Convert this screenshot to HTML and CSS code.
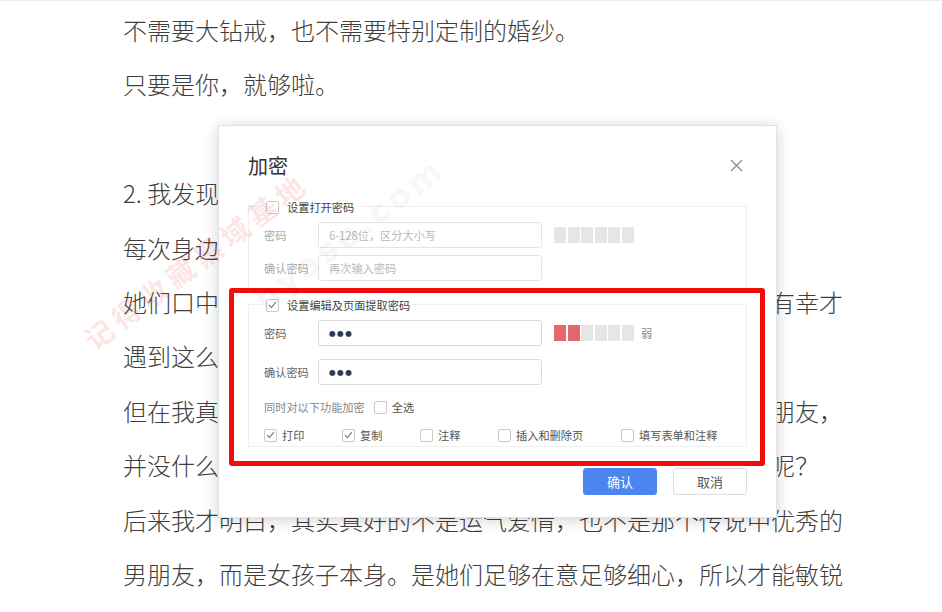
FILE: index.html
```html
<!DOCTYPE html>
<html lang="zh-CN">

<head>
    <meta charset="UTF-8">
    <meta name="viewport" content="width=device-width, initial-scale=1.0">
    <title>加密</title>
    <link rel="stylesheet" href="styles.css">
</head>

<body>
    <div class="page">
        <div class="doc">
            <p>不需要大钻戒，也不需要特别定制的婚纱。</p>
            <p>只要是你，就够啦。</p>
            <p>&nbsp;</p>
            <p>2. 我发现身边那些幸福的女孩子都有一个共同点。</p>
            <p>每次身边的朋友谈起自己的恋爱，总是满脸幸福。</p>
            <p>她们口中的男朋友总是温柔又体贴，我曾以为她们是运气好，有幸才</p>
            <p>遇到这么好的人。</p>
            <p>但在我真正了解之后才发现，她们的男朋友其实只是普通的男朋友，</p>
            <p>并没什么特别之处，那为什么她们都会觉得自己遇到了对的人呢？</p>
            <p>后来我才明白，其实真好的不是运气爱情，也不是那个传说中优秀的</p>
            <p>男朋友，而是女孩子本身。是她们足够在意足够细心，所以才能敏锐</p>
        </div>

        <!-- 加密弹窗 -->
        <div class="dialog">
            <div class="dialog-head">
                <h2>加密</h2>
                <span class="close">
                    <svg width="13" height="13" viewBox="0 0 13 13">
                        <path d="M1 1 L12 12 M12 1 L1 12" stroke="#8a8a8a" stroke-width="1.3" fill="none" />
                    </svg>
                </span>
            </div>

            <div class="group group-off">
                <div class="group-head"><span class="box"></span>设置打开密码</div>
                <div class="row">
                    <label>密码</label>
                    <input class="field" placeholder="6-128位，区分大小写">
                    <div class="meter">
                        <span></span><span></span><span></span><span></span><span></span><span></span>
                    </div>
                </div>
                <div class="row">
                    <label>确认密码</label>
                    <input class="field" placeholder="再次输入密码">
                </div>
            </div>

            <div class="group group-on">
                <div class="group-head"><span class="box"><svg width="9" height="8" viewBox="0 0 9 8"><path d="M1 4 L3.5 6.5 L8 1" stroke="#8c8c8c" stroke-width="1.2" fill="none" /></svg></span>设置编辑及页面提取密码</div>
                <div class="row">
                    <label>密码</label>
                    <div class="field dots">●●●</div>
                    <div class="meter">
                        <span class="on"></span><span class="on"></span><span></span><span></span><span></span><span></span>
                    </div>
                    <em class="level">弱</em>
                </div>
                <div class="row row-wide">
                    <label>确认密码</label>
                    <div class="field dots">●●●</div>
                </div>
                <div class="also">同时对以下功能加密<span class="box"></span><span class="txt">全选</span></div>
                <div class="checks">
                    <div class="check"><span class="box"><svg width="9" height="8" viewBox="0 0 9 8"><path d="M1 4 L3.5 6.5 L8 1" stroke="#8c8c8c" stroke-width="1.2" fill="none" /></svg></span>打印</div>
                    <div class="check"><span class="box"><svg width="9" height="8" viewBox="0 0 9 8"><path d="M1 4 L3.5 6.5 L8 1" stroke="#8c8c8c" stroke-width="1.2" fill="none" /></svg></span>复制</div>
                    <div class="check"><span class="box"></span>注释</div>
                    <div class="check"><span class="box"></span>插入和删除页</div>
                    <div class="check"><span class="box"></span>填写表单和注释</div>
                </div>
            </div>

            <div class="actions">
                <button class="btn primary">确认</button>
                <button class="btn">取消</button>
            </div>
        </div>

        <!-- 截图上的红框标注 -->
        <div class="mark-box"></div>

        <!-- 水印 -->
        <div class="watermark">记得收藏黑域基地</div>
        <div class="watermark-en">hyase.com</div>
    </div>
</body>

</html>
```

FILE: styles.css
```css
* {
    box-sizing: border-box;
}

body {
    margin: 0;
    background: #fff;
    font-family: "Noto Sans CJK SC", "Noto Sans", sans-serif;
}

.page {
    position: relative;
    width: 942px;
    height: 612px;
    overflow: hidden;
    box-shadow: inset 0 1px #ececec;
}

.doc {
    padding: 3px 0 0 123px;
}

.doc p {
    margin: 0;
    height: 54.4px;
    line-height: 54.4px;
    font-size: 24px;
    font-weight: 300;
    color: #3e3e3e;
    white-space: nowrap;
}

/* dialog */
.dialog {
    position: absolute;
    left: 218px;
    top: 125px;
    width: 559px;
    padding: 27px 29px 22px;
    background: #fff;
    border: 1px solid #e2e2e2;
    box-shadow: 0 2px 14px rgba(0, 0, 0, 0.18);
    font-size: 11.2px;
    color: #555;
}

.dialog-head {
    display: flex;
    justify-content: space-between;
    align-items: center;
    height: 24px;
}

.dialog-head h2 {
    margin: 0;
    font-size: 20px;
    font-weight: 400;
    color: #333;
}

.close {
    display: flex;
    margin-right: 4px;
}

.group {
    border: 1px solid #efefef;
    padding: 0 15px 10px;
}

.group-off {
    margin-top: 29px;
}

.group-on {
    margin-top: 12px;
    padding-bottom: 2px;
}

.group-head {
    display: flex;
    align-items: center;
    width: max-content;
    height: 16px;
    margin: -8px 0 0 -1px;
    padding: 0 3px;
    background: #fff;
    color: #444;
}

.box {
    display: inline-flex;
    align-items: center;
    justify-content: center;
    flex: none;
    width: 13px;
    height: 13px;
    margin-right: 8px;
    border: 1px solid #c9c9c9;
    border-radius: 2px;
    background: #fff;
}

.row {
    display: flex;
    align-items: center;
    margin-top: 7px;
    height: 26px;
}

.row-wide {
    margin-top: 13px;
}

.row label {
    flex: none;
    width: 54px;
    color: #666;
}

.group-off .row label {
    color: #aaa;
}

.field {
    flex: none;
    width: 224px;
    height: 26px;
    padding: 0 10px;
    border: 1px solid #dadada;
    border-radius: 3px;
    font-family: inherit;
    font-size: 11.2px;
    outline: none;
}

.group-off .field {
    border-color: #e4e4e4;
}

.field::placeholder {
    color: #b9b9b9;
}

.dots {
    display: flex;
    align-items: center;
    font-size: 6.5px;
    letter-spacing: 1.6px;
    color: #2e3b4e;
}

.meter {
    display: flex;
    gap: 1.6px;
    margin-left: 12px;
}

.meter span {
    width: 12px;
    height: 16px;
    background: #e6e6e6;
}

.meter span.on {
    background: #e5666b;
}

.level {
    margin-left: 7px;
    font-style: normal;
    color: #888;
}

.also {
    display: flex;
    align-items: center;
    height: 20px;
    margin-top: 12px;
    color: #888;
}

.also .box {
    margin-left: 9px;
    margin-right: 5px;
}

.also .txt {
    color: #555;
}

.checks {
    display: grid;
    grid-template-columns: 78px 78px 78px 123px auto;
    margin-top: 9px;
    height: 18px;
}

.check {
    display: flex;
    align-items: center;
    color: #555;
}

.check .box {
    margin-right: 5px;
}

.actions {
    display: flex;
    justify-content: flex-end;
    gap: 16px;
    margin-top: 21px;
}

.btn {
    width: 74px;
    height: 27px;
    border: 1px solid #dcdcdc;
    border-radius: 3px;
    background: #fff;
    font-family: inherit;
    font-size: 13px;
    color: #555;
}

.btn.primary {
    border-color: #4a85f0;
    background: #4a85f0;
    color: #fff;
}

/* 红框 */
.mark-box {
    position: absolute;
    left: 229px;
    top: 288px;
    width: 536px;
    height: 178px;
    border: 5px solid #f20c0c;
    border-radius: 3px;
}

.watermark {
    position: absolute;
    left: 60px;
    top: 240px;
    transform: rotate(-37deg);
    font-size: 28px;
    font-weight: 700;
    letter-spacing: 6px;
    color: rgba(240, 90, 90, 0.16);
    white-space: nowrap;
}

.watermark-en {
    position: absolute;
    left: 235px;
    top: 215px;
    transform: rotate(-37deg);
    font-family: "DejaVu Sans", sans-serif;
    font-size: 32px;
    font-weight: 700;
    letter-spacing: 4px;
    color: rgba(0, 0, 0, 0.05);
    white-space: nowrap;
}
```
